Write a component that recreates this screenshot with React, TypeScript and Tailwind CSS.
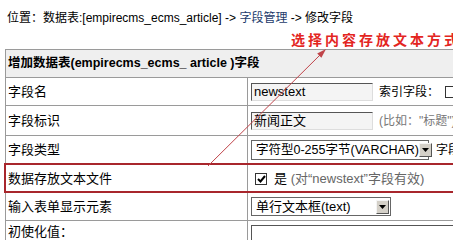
export default function App() {
  const rows = [
    { label: '字段名', h: 'h-[28px]', content: 'name' },
    { label: '字段标识', h: 'h-[30px]', content: 'title' },
    { label: '字段类型', h: 'h-[29px]', content: 'type' },
    { label: '数据存放文本文件', h: 'h-[28px]', content: 'file' },
    { label: '输入表单显示元素', h: 'h-[28px]', content: 'form' },
    { label: '初使化值：', h: 'h-[40px]', content: 'init' },
  ]

  const input = 'h-[18px] border border-t-[#555] border-l-[#555] border-b-[#ddd] border-r-[#ddd] bg-[#f4f4f4] px-[2px] text-[13px] leading-[15px] text-black whitespace-nowrap'

  const dropBtn = (
    <span className="flex h-[14px] w-[13px] shrink-0 items-center justify-center border border-t-[#f4f4f4] border-l-[#f4f4f4] border-b-[#555] border-r-[#555] bg-[#d4d0c8]">
      <svg width="7" height="4" viewBox="0 0 7 4">
        <path d="M0 0h7L3.5 4z" fill="#000" />
      </svg>
    </span>
  )

  const renderContent = (c: string) => {
    switch (c) {
      case 'name':
        return (
          <div className="flex items-center gap-[6px] whitespace-nowrap">
            <div className={`${input} w-[122px]`}>newstext</div>
            <span>索引字段：</span>
            <span className="h-[12px] w-[12px] border border-[#333] bg-white" />
          </div>
        )
      case 'title':
        return (
          <div className="flex items-center gap-[6px] whitespace-nowrap">
            <div className={`${input} w-[122px]`}>新闻正文</div>
            <span className="text-[#777]">(比如："标题")</span>
          </div>
        )
      case 'type':
        return (
          <div className="flex items-center gap-[7px] whitespace-nowrap">
            <div className="flex h-[20px] w-[178px] items-center justify-between border border-[#666] bg-white pl-[4px] pr-[1px] text-[12.5px]">
              <span className="whitespace-nowrap">字符型0-255字节(VARCHAR)</span>
              {dropBtn}
            </div>
            <span>字段长度</span>
          </div>
        )
      case 'file':
        return (
          <div className="flex items-center gap-[7px] whitespace-nowrap pl-[4px]">
            <span className="flex h-[12px] w-[12px] items-center justify-center border border-[#333] bg-white">
              <svg width="9" height="8" viewBox="0 0 9 8">
                <path d="M1 4l2.5 2.5L8 1" stroke="#000" strokeWidth="2" fill="none" />
              </svg>
            </span>
            <span className="text-[13px]">
              是 <span className="text-[#666]">(对“newstext”字段有效)</span>
            </span>
          </div>
        )
      case 'form':
        return (
          <div className="flex h-[19px] w-[140px] items-center justify-between whitespace-nowrap border border-[#666] bg-white pl-[4px] pr-[1px] text-[13px]">
            <span>单行文本框(text)</span>
            {dropBtn}
          </div>
        )
      default:
        return (
          <div className="mt-[4px] h-[40px] w-[300px] border border-t-[#555] border-l-[#555] border-b-[#ddd] border-r-[#ddd] bg-white" />
        )
    }
  }

  return (
    <div className="relative h-[240px] w-[453px] overflow-hidden bg-white text-[12px] text-black [font-family:'Liberation_Sans','Noto_Sans_CJK_SC',sans-serif]">
      <div className="pl-[7px] pt-[11px] leading-[14px]">
        位置：数据表:[empirecms_ecms_article] -&gt; <span className="text-[#1d3b6b]">字段管理</span> -&gt; 修改字段
      </div>

      <div className="ml-[5px] mt-[24px] w-[620px] border border-[#9a9a9a]">
        <div className="flex h-[28px] items-center border-b border-[#9a9a9a] bg-[#efefef] pl-[2px] text-[12.5px] font-bold">
          增加数据表(empirecms_ecms_ article )字段
        </div>
        {rows.map((r, i) => (
          <div
            key={i}
            className={`relative grid grid-cols-[242px_1fr] ${r.h} ${i < rows.length - 1 ? 'border-b border-[#9a9a9a]' : ''}`}
          >
            <div className={`flex border-r border-[#9a9a9a] pl-[2px] text-[13px] leading-[16px] ${r.content === 'init' ? 'pt-[3px]' : 'items-center'}`}>
              {r.label}
            </div>
            <div className={`flex pl-[3px] ${r.content === 'init' ? '' : 'items-center'}`}>{renderContent(r.content)}</div>
            {r.content === 'file' && (
              <div className="pointer-events-none absolute -left-[2px] -right-[2px] -top-[2px] -bottom-[1px] border-2 border-[#a8262c]" />
            )}
          </div>
        ))}
      </div>

      <div className="absolute left-[291px] top-[32px] whitespace-nowrap text-[14px] font-bold leading-[16px] tracking-[3px] text-[#e3261f]">
        选择内容存放文本方式
      </div>

      <svg className="pointer-events-none absolute left-0 top-0" width="453" height="240">
        <line x1="208" y1="166" x2="321" y2="54" stroke="#c0444a" strokeWidth="1" />
        <path d="M326 49 L317.2 53.5 L321.4 57.7 Z" fill="#c0444a" />
      </svg>
    </div>
  )
}
